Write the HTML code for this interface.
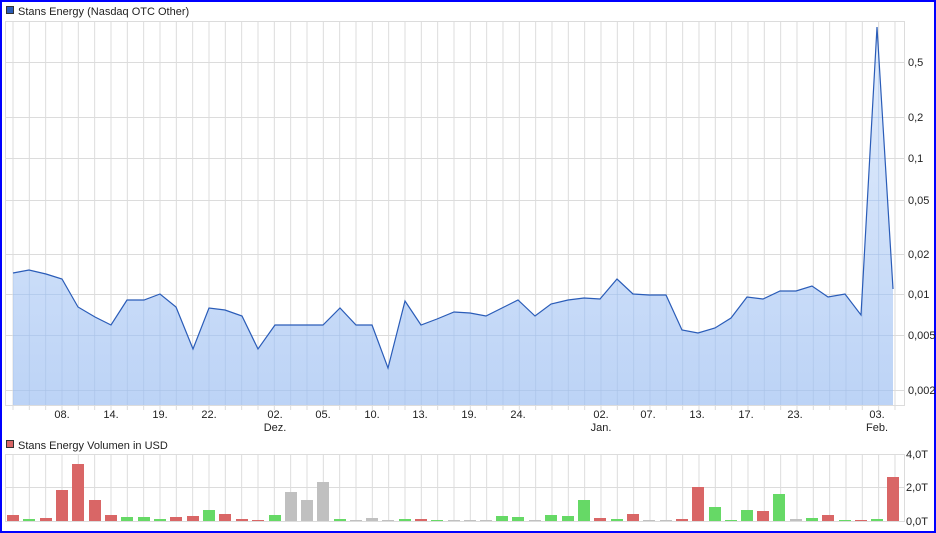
<!DOCTYPE html>
<html><head><meta charset="utf-8"><style>
html,body{margin:0;padding:0;background:#fff}
svg{display:block;font-family:"Liberation Sans",Arial,sans-serif}
</style></head><body>
<svg width="936" height="533" viewBox="0 0 936 533" xmlns="http://www.w3.org/2000/svg">
<defs>
<pattern id="vg" x="12.5" y="0" width="16.333" height="533" patternUnits="userSpaceOnUse">
<rect x="0" y="0" width="1" height="533" fill="#dcdcdc"/>
</pattern>
<pattern id="vg2" x="12.5" y="0" width="16.333" height="533" patternUnits="userSpaceOnUse">
<rect x="0" y="0" width="1" height="533" fill="#a9c1e6" fill-opacity="0.6"/>
</pattern>
<linearGradient id="fg" x1="0" y1="0" x2="0" y2="1">
<stop offset="0" stop-color="#e4eefc"/><stop offset="1" stop-color="#bcd3f6"/>
</linearGradient>
<clipPath id="fc"><polygon points="13,406 13,273 29,270 46,274 62,279 78,307 95,317 111,325 127,300 144,300 160,294 176,307 193,349 209,308 225,310 242,316 258,349 275,325 291,325 307,325 323,325 340,308 356,325 372,325 388,368 405,301 421,325 437,319 454,312 470,313 486,316 502,308 518,300 535,316 551,304 568,300 584,298 600,299 617,279 633,294 649,295 666,295 682,330 698,333 715,328 731,318 747,297 763,299 780,291 796,291 812,286 828,297 845,294 861,315 877,27 893,289 893,406"/></clipPath>
</defs>
<rect x="1" y="1" width="934" height="531" fill="#fff" stroke="#0000ff" stroke-width="2"/>
<rect x="6.5" y="6.5" width="7" height="7" fill="#2a5cb8" stroke="#333"/>
<text x="18" y="15" font-size="11" fill="#222">Stans Energy (Nasdaq OTC Other)</text>
<rect x="5" y="21" width="900" height="385" fill="url(#vg)"/>
<g stroke="#dcdcdc" stroke-width="1">
<line x1="5" y1="62.5" x2="905" y2="62.5"/>
<line x1="5" y1="117.5" x2="905" y2="117.5"/>
<line x1="5" y1="158.5" x2="905" y2="158.5"/>
<line x1="5" y1="200.5" x2="905" y2="200.5"/>
<line x1="5" y1="254.5" x2="905" y2="254.5"/>
<line x1="5" y1="294.5" x2="905" y2="294.5"/>
<line x1="5" y1="335.5" x2="905" y2="335.5"/>
<line x1="5" y1="390.5" x2="905" y2="390.5"/>
</g>
<g clip-path="url(#fc)">
<rect x="13" y="21" width="880" height="385" fill="url(#fg)"/>
<rect x="13" y="21" width="880" height="385" fill="url(#vg2)"/>
<g stroke="#a9c1e6" stroke-opacity="0.6">
<line x1="5" y1="294.5" x2="905" y2="294.5"/>
<line x1="5" y1="335.5" x2="905" y2="335.5"/>
<line x1="5" y1="390.5" x2="905" y2="390.5"/>
<line x1="5" y1="62.5" x2="905" y2="62.5"/>
<line x1="5" y1="117.5" x2="905" y2="117.5"/>
<line x1="5" y1="158.5" x2="905" y2="158.5"/>
<line x1="5" y1="200.5" x2="905" y2="200.5"/>
<line x1="5" y1="254.5" x2="905" y2="254.5"/>
</g>
</g>
<polyline fill="none" stroke="#2a5cb8" stroke-width="1.2" points="13,273 29,270 46,274 62,279 78,307 95,317 111,325 127,300 144,300 160,294 176,307 193,349 209,308 225,310 242,316 258,349 275,325 291,325 307,325 323,325 340,308 356,325 372,325 388,368 405,301 421,325 437,319 454,312 470,313 486,316 502,308 518,300 535,316 551,304 568,300 584,298 600,299 617,279 633,294 649,295 666,295 682,330 698,333 715,328 731,318 747,297 763,299 780,291 796,291 812,286 828,297 845,294 861,315 877,27 893,289"/>
<rect x="5.5" y="21.5" width="899" height="384" fill="none" stroke="#dcdcdc"/>
<rect x="5" y="406" width="900" height="4" fill="url(#vg)"/>
<g font-size="11" fill="#222">
<text x="908" y="66">0,5</text>
<text x="908" y="121">0,2</text>
<text x="908" y="162">0,1</text>
<text x="908" y="204">0,05</text>
<text x="908" y="258">0,02</text>
<text x="908" y="298">0,01</text>
<text x="908" y="339">0,005</text>
<text x="908" y="394">0,002</text>
</g>
<g font-size="11" fill="#222" text-anchor="middle">
<text x="62" y="418">08.</text>
<text x="111" y="418">14.</text>
<text x="160" y="418">19.</text>
<text x="209" y="418">22.</text>
<text x="275" y="418">02.</text><text x="275" y="431">Dez.</text>
<text x="323" y="418">05.</text>
<text x="372" y="418">10.</text>
<text x="420" y="418">13.</text>
<text x="469" y="418">19.</text>
<text x="518" y="418">24.</text>
<text x="601" y="418">02.</text><text x="601" y="431">Jan.</text>
<text x="648" y="418">07.</text>
<text x="697" y="418">13.</text>
<text x="746" y="418">17.</text>
<text x="795" y="418">23.</text>
<text x="877" y="418">03.</text><text x="877" y="431">Feb.</text>
</g>
<rect x="6.5" y="440.5" width="7" height="7" fill="#d96666" stroke="#333"/>
<text x="18" y="449" font-size="11" fill="#222">Stans Energy Volumen in USD</text>
<rect x="5" y="454" width="900" height="67" fill="url(#vg)"/>
<g stroke="#dcdcdc"><line x1="5" y1="487.5" x2="905" y2="487.5"/></g>
<rect x="5.5" y="454.5" width="899" height="67" fill="none" stroke="#dcdcdc"/>
<g>
<rect x="7" y="515" width="12" height="6" fill="#d96666"/>
<rect x="23" y="519" width="12" height="2" fill="#66d966"/>
<rect x="40" y="518" width="12" height="3" fill="#d96666"/>
<rect x="56" y="490" width="12" height="31" fill="#d96666"/>
<rect x="72" y="464" width="12" height="57" fill="#d96666"/>
<rect x="89" y="500" width="12" height="21" fill="#d96666"/>
<rect x="105" y="515" width="12" height="6" fill="#d96666"/>
<rect x="121" y="517" width="12" height="4" fill="#66d966"/>
<rect x="138" y="517" width="12" height="4" fill="#66d966"/>
<rect x="154" y="519" width="12" height="2" fill="#66d966"/>
<rect x="170" y="517" width="12" height="4" fill="#d96666"/>
<rect x="187" y="516" width="12" height="5" fill="#d96666"/>
<rect x="203" y="510" width="12" height="11" fill="#66d966"/>
<rect x="219" y="514" width="12" height="7" fill="#d96666"/>
<rect x="236" y="519" width="12" height="2" fill="#d96666"/>
<rect x="252" y="520" width="12" height="1" fill="#d96666"/>
<rect x="269" y="515" width="12" height="6" fill="#66d966"/>
<rect x="285" y="492" width="12" height="29" fill="#c0c0c0"/>
<rect x="301" y="500" width="12" height="21" fill="#c0c0c0"/>
<rect x="317" y="482" width="12" height="39" fill="#c0c0c0"/>
<rect x="334" y="519" width="12" height="2" fill="#66d966"/>
<rect x="350" y="520" width="12" height="1" fill="#c0c0c0"/>
<rect x="366" y="518" width="12" height="3" fill="#c0c0c0"/>
<rect x="382" y="520" width="12" height="1" fill="#c0c0c0"/>
<rect x="399" y="519" width="12" height="2" fill="#66d966"/>
<rect x="415" y="519" width="12" height="2" fill="#d96666"/>
<rect x="431" y="520" width="12" height="1" fill="#66d966"/>
<rect x="448" y="520" width="12" height="1" fill="#c0c0c0"/>
<rect x="464" y="520" width="12" height="1" fill="#c0c0c0"/>
<rect x="480" y="520" width="12" height="1" fill="#c0c0c0"/>
<rect x="496" y="516" width="12" height="5" fill="#66d966"/>
<rect x="512" y="517" width="12" height="4" fill="#66d966"/>
<rect x="529" y="520" width="12" height="1" fill="#c0c0c0"/>
<rect x="545" y="515" width="12" height="6" fill="#66d966"/>
<rect x="562" y="516" width="12" height="5" fill="#66d966"/>
<rect x="578" y="500" width="12" height="21" fill="#66d966"/>
<rect x="594" y="518" width="12" height="3" fill="#d96666"/>
<rect x="611" y="519" width="12" height="2" fill="#66d966"/>
<rect x="627" y="514" width="12" height="7" fill="#d96666"/>
<rect x="643" y="520" width="12" height="1" fill="#c0c0c0"/>
<rect x="660" y="520" width="12" height="1" fill="#c0c0c0"/>
<rect x="676" y="519" width="12" height="2" fill="#d96666"/>
<rect x="692" y="487" width="12" height="34" fill="#d96666"/>
<rect x="709" y="507" width="12" height="14" fill="#66d966"/>
<rect x="725" y="520" width="12" height="1" fill="#66d966"/>
<rect x="741" y="510" width="12" height="11" fill="#66d966"/>
<rect x="757" y="511" width="12" height="10" fill="#d96666"/>
<rect x="773" y="494" width="12" height="27" fill="#66d966"/>
<rect x="790" y="519" width="12" height="2" fill="#c0c0c0"/>
<rect x="806" y="518" width="12" height="3" fill="#66d966"/>
<rect x="822" y="515" width="12" height="6" fill="#d96666"/>
<rect x="839" y="520" width="12" height="1" fill="#66d966"/>
<rect x="855" y="520" width="12" height="1" fill="#d96666"/>
<rect x="871" y="519" width="12" height="2" fill="#66d966"/>
<rect x="887" y="477" width="12" height="44" fill="#d96666"/>
</g>
<g font-size="11" fill="#222">
<text x="906" y="458">4,0T</text>
<text x="906" y="491">2,0T</text>
<text x="906" y="525">0,0T</text>
</g>
</svg>
</body></html>
